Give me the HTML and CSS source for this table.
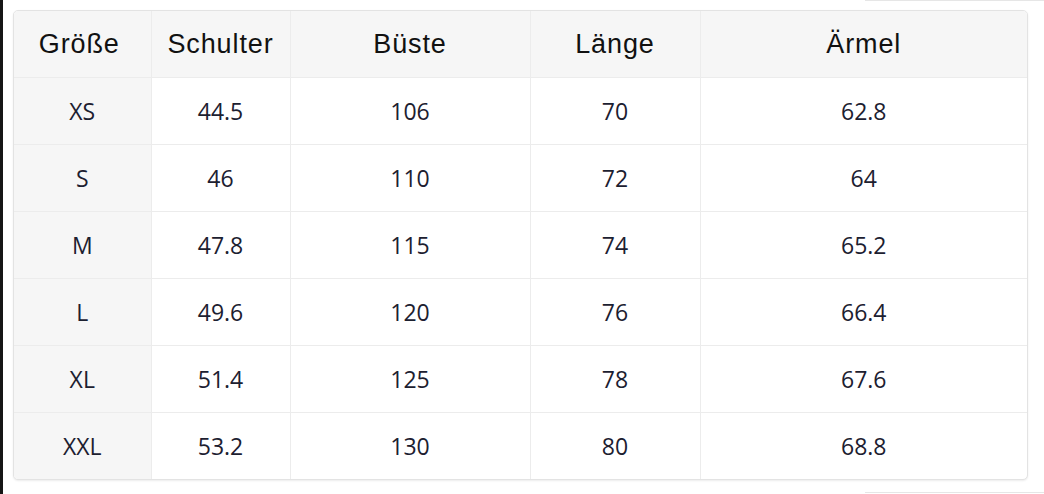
FILE: index.html
```html
<!DOCTYPE html>
<html lang="de">
<head>
<meta charset="utf-8">
<title>Größentabelle</title>
<link rel="stylesheet" href="styles.css">
</head>
<body>
<div class="page">
  <div class="edge-line"></div>
  <div class="card">
    <table class="sizes">
      <colgroup>
        <col class="c1"><col class="c2"><col class="c3"><col class="c4"><col class="c5">
      </colgroup>
      <thead>
        <tr><th>Größe</th><th>Schulter</th><th>Büste</th><th>Länge</th><th>Ärmel</th></tr>
      </thead>
      <tbody>
        <tr><td class="size">XS</td><td>44.5</td><td>106</td><td>70</td><td>62.8</td></tr>
        <tr><td class="size">S</td><td>46</td><td>110</td><td>72</td><td>64</td></tr>
        <tr><td class="size">M</td><td>47.8</td><td>115</td><td>74</td><td>65.2</td></tr>
        <tr><td class="size">L</td><td>49.6</td><td>120</td><td>76</td><td>66.4</td></tr>
        <tr><td class="size">XL</td><td>51.4</td><td>125</td><td>78</td><td>67.6</td></tr>
        <tr><td class="size">XXL</td><td>53.2</td><td>130</td><td>80</td><td>68.8</td></tr>
      </tbody>
    </table>
  </div>
  <div class="edge-line bottom"></div>
</div>
</body>
</html>
```

FILE: styles.css
```css
html, body {
  margin: 0;
  padding: 0;
  background: #ffffff;
}
body {
  width: 1044px;
  height: 494px;
  overflow: hidden;
}
.page {
  box-sizing: border-box;
  width: 1044px;
  height: 494px;
  border-left: 3px solid #151515;
  display: flex;
  flex-direction: column;
}
.edge-line {
  align-self: flex-end;
  width: 179px;
  height: 1px;
  background: #e6e6e6;
}
.edge-line.bottom {
  margin-top: 12px;
}
.card {
  margin: 9px 0 0 10px;
  width: 1013px;
  border: 1px solid #e3e3e3;
  border-radius: 5px;
  box-shadow: 0 1px 2px rgba(0,0,0,0.08);
  overflow: hidden;
  background: #fff;
}
.sizes {
  width: 100%;
  border-collapse: collapse;
  table-layout: fixed;
}
.c1 { width: 137px; }
.c2 { width: 139px; }
.c3 { width: 240px; }
.c4 { width: 170px; }
.c5 { width: auto; }
.sizes th,
.sizes td {
  padding: 0;
  text-align: center;
  border-right: 1px solid #ececec;
  border-bottom: 1px solid #ececec;
}
.sizes th:last-child,
.sizes td:last-child {
  border-right: none;
}
.sizes tbody tr:last-child td {
  border-bottom: none;
}
.sizes th {
  height: 66px;
  background: #f6f6f6;
  font-family: "Liberation Sans", Arial, sans-serif;
  font-weight: normal;
  font-size: 27px;
  letter-spacing: 0.9px;
  color: #111;
}
.sizes th:first-child {
  padding-right: 6px;
}
.sizes td {
  height: 66px;
  font-family: "Open Sans", "Noto Sans", sans-serif;
  font-size: 23px;
  color: #1c2030;
}
.sizes td.size {
  background: #f6f6f6;
}
```
